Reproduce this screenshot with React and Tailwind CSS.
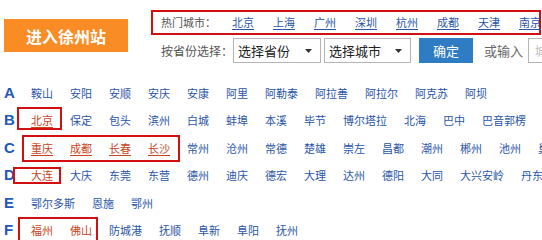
import React from "react";

const hotCities = ["北京", "上海", "广州", "深圳", "杭州", "成都", "天津", "南京"];

const groups = [
  {
    letter: "A",
    cities: ["鞍山", "安阳", "安顺", "安庆", "安康", "阿里", "阿勒泰", "阿拉善", "阿拉尔", "阿克苏", "阿坝"],
  },
  {
    letter: "B",
    hot: 1,
    underline: true,
    cities: ["北京", "保定", "包头", "滨州", "白城", "蚌埠", "本溪", "毕节", "博尔塔拉", "北海", "巴中", "巴音郭楞"],
  },
  {
    letter: "C",
    hot: 4,
    underline: true,
    cities: ["重庆", "成都", "长春", "长沙", "常州", "沧州", "常德", "楚雄", "崇左", "昌都", "潮州", "郴州", "池州", "巢湖"],
  },
  {
    letter: "D",
    hot: 1,
    cities: ["大连", "大庆", "东莞", "东营", "德州", "迪庆", "德宏", "大理", "达州", "德阳", "大同", "大兴安岭", "丹东"],
  },
  { letter: "E", cities: ["鄂尔多斯", "恩施", "鄂州"] },
  {
    letter: "F",
    hot: 2,
    cities: ["福州", "佛山", "防城港", "抚顺", "阜新", "阜阳", "抚州"],
  },
];

const Select = ({ label, width }) => (
  <div
    className={`${width} shrink-0 h-[25px] border border-[#b5b5b5] bg-white flex items-center justify-between pl-[4px] pr-[8px] text-[13px] text-[#222]`}
  >
    <span>{label}</span>
    <svg width="7" height="4" viewBox="0 0 7 4">
      <path d="M0 0h7L3.5 4z" fill="#333" />
    </svg>
  </div>
);

export default function App() {
  return (
    <div
      className="relative w-[542px] h-[240px] overflow-hidden bg-white"
      style={{ fontFamily: '"Noto Sans CJK SC", "Noto Sans", sans-serif' }}
    >
      {/* Header */}
      <div className="flex pt-[10px]">
        <div className="pl-[4px] pt-[9px] shrink-0">
          <div className="w-[124px] h-[33px] bg-[#f98c25] text-white text-[16px] font-bold flex items-center justify-center">
            进入徐州站
          </div>
        </div>

        <div className="ml-[23px] shrink-0">
          {/* Hot cities */}
          <div className="w-[390px] h-[25px] border-2 border-[#d40f0f] flex items-center pl-[8px] text-[11px] whitespace-nowrap">
            <span className="text-[#555] w-[71px] shrink-0">热门城市：</span>
            <div className="flex gap-[19px]">
              {hotCities.map((c) => (
                <a key={c} className="text-[#2a55a8] underline underline-offset-2">
                  {c}
                </a>
              ))}
            </div>
          </div>

          {/* Province select */}
          <div className="mt-[3px] flex items-center whitespace-nowrap">
            <span className="text-[#555] text-[12px] w-[82px] shrink-0 pl-[10px]">按省份选择：</span>
            <Select label="选择省份" width="w-[88px]" />
            <div className="w-[3px] shrink-0" />
            <Select label="选择城市" width="w-[87px]" />
            <div className="ml-[8px] shrink-0 w-[54px] h-[25px] bg-[#2d7cc4] text-white text-[13px] flex items-center justify-center">
              确定
            </div>
            <span className="ml-[11px] shrink-0 text-[#666] text-[13px]">或输入</span>
            <div className="ml-[5px] shrink-0 w-[60px] h-[25px] border border-[#b5b5b5] pl-[6px] flex items-center text-[12px] text-[#bbb] overflow-hidden">
              城市
            </div>
          </div>
        </div>
      </div>

      {/* Letter rows */}
      <div className="mt-[16px]">
        {groups.map((g) => (
          <div key={g.letter} className="h-[27.5px] flex items-center whitespace-nowrap">
            <span
              className="w-[31px] shrink-0 pl-[4px] text-[15px] font-bold text-[#2557b8]"
              style={{ fontFamily: '"Liberation Sans", Arial, sans-serif' }}
            >
              {g.letter}
            </span>
            <div className="flex gap-[17px] text-[11px] shrink-0">
              {g.cities.map((c, i) => {
                const hot = g.hot && i < g.hot;
                return (
                  <a
                    key={c}
                    className={
                      hot
                        ? g.underline
                          ? "text-[#c8441c] underline underline-offset-2"
                          : "text-[#c8441c]"
                        : "text-[#2a55a8]"
                    }
                  >
                    {c}
                  </a>
                );
              })}
            </div>
          </div>
        ))}
      </div>

      {/* Red annotation boxes */}
      <div className="absolute left-[17px] top-[107px] w-[45px] h-[23px] border-2 border-[#d40f0f]" />
      <div className="absolute left-[22px] top-[135px] w-[158px] h-[27px] border-2 border-[#d40f0f]" />
      <div className="absolute left-[13px] top-[167px] w-[48px] h-[17px] border-2 border-[#d40f0f]" />
      <div className="absolute left-[18px] top-[217px] w-[80px] h-[26px] border-2 border-[#d40f0f]" />
    </div>
  );
}
